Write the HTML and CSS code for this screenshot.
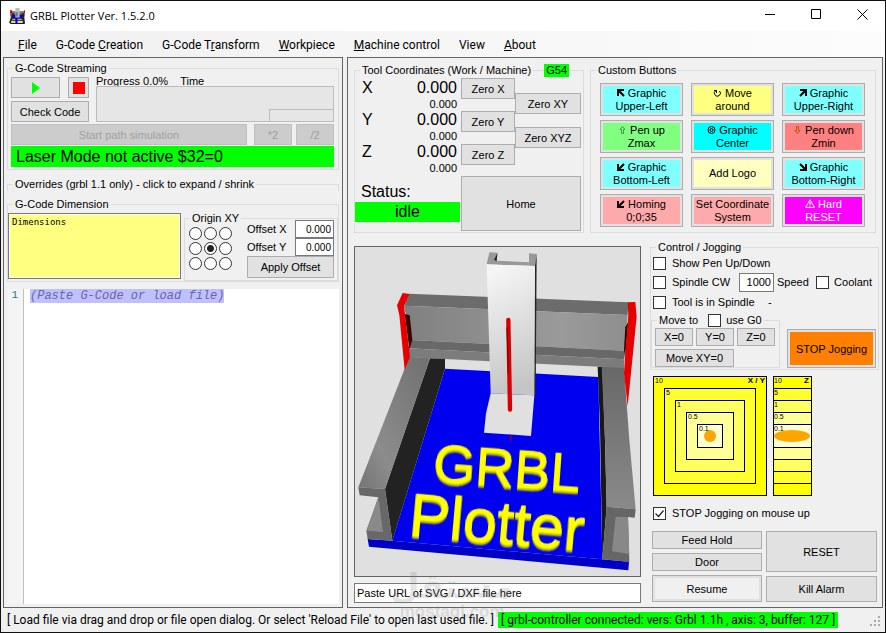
FILE: index.html
```html
<!DOCTYPE html>
<html lang="en">
<head>
	<meta charset="UTF-8">
	<title>GRBL Plotter Ver. 1.5.2.0</title>
	<link rel="stylesheet" href="styles.css">
</head>
<body>
	<div class="window">
		<header class="titlebar">
			<svg class="app-icon" viewBox="0 0 16 16" width="17" height="17">
				<path d="M1 3h14v5H1z" fill="#777"/>
				<path d="M4 6h8l3 9H1z" fill="#0000e0"/>
				<path d="M3 5h2L2 14H0zM12 5h2l1 9h-2z" fill="#222"/>
				<path d="M6 0h4v9H6z" fill="#bbb"/>
				<path d="M7 4h1v4H7z" fill="#444"/>
				<path d="M1 2h2v3H1zM14 2h1v3h-1z" fill="#d00"/>
				<path d="M3 10h3v1H3zM8 10h4v1H8zM2 12h4v2H2zM8 12h5v2H8z" fill="#ee0"/>
			</svg>
			<h1>GRBL Plotter Ver. 1.5.2.0</h1>
			<div class="win-btns">
				<button type="button" aria-label="Minimize"><svg width="11" height="11"><path d="M0 5.500h10" stroke="#000"/></svg></button>
				<button type="button" aria-label="Maximize"><svg width="11" height="11"><path d="M.5 .5h9v9h-9z" fill="none" stroke="#000"/></svg></button>
				<button type="button" aria-label="Close"><svg width="11" height="11"><path d="M.5 .5l10 10M10.500 .5l-10 10" stroke="#000"/></svg></button>
			</div>
		</header>
		<nav class="menubar">
			<a href="#"><u>F</u>ile</a>
			<a href="#">G-Code <u>C</u>reation</a>
			<a href="#">G-Code T<u>r</u>ansform</a>
			<a href="#"><u>W</u>orkpiece</a>
			<a href="#"><u>M</u>achine control</a>
			<a href="#">View</a>
			<a href="#"><u>A</u>bout</a>
		</nav>

		<main class="split">
			<section class="panel panel-left">
				<fieldset class="streaming">
					<legend>G-Code Streaming</legend>
					<div class="stream-body">
						<div class="stream-top">
							<div class="stream-btns">
								<button type="button" class="btn" aria-label="Start"><svg width="8" height="12"><path d="M0 0l8 6-8 6z" fill="#0f0"/></svg></button>
								<button type="button" class="btn" aria-label="Stop"><svg width="12" height="12"><path d="M0 0h12v12H0z" fill="#f00"/></svg></button>
								<button type="button" class="btn check-code">Check Code</button>
							</div>
							<div class="progress">
								<div class="progress-text"><span>Progress 0.0%</span><span>Time</span></div>
								<div class="progress-box"><div class="progress-time"></div></div>
							</div>
						</div>
						<div class="sim-row">
							<button type="button" class="btn sim" disabled>Start path simulation</button>
							<button type="button" class="btn" disabled>*2</button>
							<button type="button" class="btn" disabled>/2</button>
						</div>
						<div class="laser">Laser Mode not active $32=0</div>
					</div>
				</fieldset>
				<fieldset class="overrides">
					<legend>Overrides (grbl 1.1 only) - click to expand / shrink</legend>
				</fieldset>
				<fieldset class="dimension">
					<legend>G-Code Dimension</legend>
					<div class="dim-body">
						<textarea class="dim-text" aria-label="Dimensions" readonly>Dimensions</textarea>
						<fieldset class="origin">
							<legend>Origin XY</legend>
							<div class="origin-body">
								<div class="radios">
									<input type="radio" name="origin" aria-label="Top left">
									<input type="radio" name="origin" aria-label="Top center">
									<input type="radio" name="origin" aria-label="Top right">
									<input type="radio" name="origin" aria-label="Middle left">
									<input type="radio" name="origin" aria-label="Center" checked>
									<input type="radio" name="origin" aria-label="Middle right">
									<input type="radio" name="origin" aria-label="Bottom left">
									<input type="radio" name="origin" aria-label="Bottom center">
									<input type="radio" name="origin" aria-label="Bottom right">
								</div>
								<div class="offsets">
									<label for="offX">Offset X</label><input type="text" id="offX" value="0.000">
									<label for="offY">Offset Y</label><input type="text" id="offY" value="0.000">
									<button type="button" class="btn">Apply Offset</button>
								</div>
							</div>
						</fieldset>
					</div>
				</fieldset>
				<div class="editor">
					<div class="gutter">1</div>
					<pre class="code"><span>(Paste G-Code or load file)</span></pre>
				</div>
			</section>

			<section class="panel panel-right">
				<div class="top-row">
					<fieldset class="coords">
						<legend>Tool Coordinates (Work / Machine)</legend>
						<span class="g54">G54</span>
						<div class="coords-body">
							<div class="readout">
								<div class="axis"><b>X</b><span>0.000</span><small>0.000</small></div>
								<div class="axis"><b>Y</b><span>0.000</span><small>0.000</small></div>
								<div class="axis"><b>Z</b><span>0.000</span><small>0.000</small></div>
								<div class="status-label">Status:</div>
								<div class="status-value">idle</div>
							</div>
							<div class="zero">
								<div class="zero-cols">
									<div class="zero-single">
										<button type="button" class="btn">Zero X</button>
										<button type="button" class="btn">Zero Y</button>
										<button type="button" class="btn">Zero Z</button>
									</div>
									<div class="zero-multi">
										<button type="button" class="btn">Zero XY</button>
										<button type="button" class="btn">Zero XYZ</button>
									</div>
								</div>
								<button type="button" class="btn home">Home</button>
							</div>
						</div>
					</fieldset>
					<fieldset class="custom">
						<legend>Custom Buttons</legend>
						<div class="custom-grid">
							<button type="button" class="btn cyan"><span><svg class="ico" viewBox="0 0 8 8"><path d="M1 7V1h6M1.500 1.500L7 7"/></svg> Graphic<br>Upper-Left</span></button>
							<button type="button" class="btn yellow"><span><svg class="ico thin" viewBox="0 0 8 8"><path d="M2.500 1.500A3 3 0 1 0 6 2M.5 1.500h2.500V4"/></svg> Move<br>around</span></button>
							<button type="button" class="btn cyan"><span><svg class="ico" viewBox="0 0 8 8"><path d="M1 1h6v6M6.500 1.500L1 7"/></svg> Graphic<br>Upper-Right</span></button>
							<button type="button" class="btn green"><span><svg class="ico thin" viewBox="0 0 8 8"><path d="M1.500 3.500L4 .5l2.500 3H5v4H3v-4z" stroke="#494"/></svg> Pen up<br>Zmax</span></button>
							<button type="button" class="btn aqua"><span><svg class="ico thin" viewBox="0 0 8 8"><circle cx="4" cy="4" r="3.500"/><circle cx="4" cy="4" r="1.500"/></svg> Graphic<br>Center</span></button>
							<button type="button" class="btn red"><span><svg class="ico thin" viewBox="0 0 8 8"><path d="M1.500 4.500L4 7.500l2.500-3H5v-4H3v4z" stroke="#b50"/></svg> Pen down<br>Zmin</span></button>
							<button type="button" class="btn cyan"><span><svg class="ico" viewBox="0 0 8 8"><path d="M1 1v6h6M1.500 6.500L7 1"/></svg> Graphic<br>Bottom-Left</span></button>
							<button type="button" class="btn cream">Add Logo</button>
							<button type="button" class="btn cyan"><span><svg class="ico" viewBox="0 0 8 8"><path d="M7 1v6H1M6.500 6.500L1 1"/></svg> Graphic<br>Bottom-Right</span></button>
							<button type="button" class="btn pink"><span><svg class="ico" viewBox="0 0 8 8"><path d="M1 1v6h6M1.500 6.500L7 1"/></svg> Homing<br>0;0;35</span></button>
							<button type="button" class="btn pink">Set Coordinate<br>System</button>
							<button type="button" class="btn magenta"><span><svg class="ico warn" viewBox="0 0 10 9"><path d="M5 .7L9.400 8.400H.6zM5 3v3M5 6.700v1"/></svg> Hard<br>RESET</span></button>
						</div>
					</fieldset>
				</div>

				<div class="bottom-row">
					<div class="view-col">
						<div class="view3d">
							<svg viewBox="15 21 855 987" preserveAspectRatio="xMidYMid meet">
								<defs>
									<linearGradient id="col" x1=".3" y1="0" x2=".5" y2="1">
										<stop offset="0" stop-color="#f6f6f6"/>
										<stop offset="1" stop-color="#c4c4c4"/>
									</linearGradient>
									<linearGradient id="railL" x1="1" y1="0" x2="0" y2="1">
										<stop offset="0" stop-color="#707070"/>
										<stop offset=".7" stop-color="#8c8c8c"/>
										<stop offset="1" stop-color="#747474"/>
									</linearGradient>
									<linearGradient id="railR" x1="0" y1="0" x2="0" y2="1">
										<stop offset="0" stop-color="#686868"/>
										<stop offset="1" stop-color="#8a8a8a"/>
									</linearGradient>
									<linearGradient id="beam" x1="0" y1="0" x2="1" y2="0">
										<stop offset="0" stop-color="#808080"/>
										<stop offset=".7" stop-color="#9a9a9a"/>
										<stop offset="1" stop-color="#8e8e8e"/>
									</linearGradient>
								</defs>
								<!-- bed -->
								<path d="M285 386L745 411L757 958L127 902z" fill="#0000f0"/>
								<path d="M53 897L127 902L757 958L837 965L835 991L57 920z" fill="#0000c8"/>
								<!-- left rail -->
								<path d="M240 355H285V386L127 902L105 747z" fill="#222"/>
								<path d="M178 350L240 355L105 747L25 742z" fill="url(#railL)"/>
								<path d="M25 742L105 747L127 902L53 897L49 872L85 772L29 766z" fill="#686868"/>
								<path d="M85 772L99 876L50 872z" fill="#8a8a8a"/>
								<!-- right rail -->
								<path d="M743 380H757L765 600L770 800L757 958L750 560z" fill="#181818"/>
								<path d="M755 378L822 382L838 600L857 808L770 800L765 600z" fill="url(#railR)"/>
								<path d="M770 800L857 808L854 833L834 831L838 966L757 958z" fill="#666"/>
								<path d="M797 830L834 832L838 942L786 934z" fill="#888"/>
								<!-- gantry -->
								<path d="M178 161L835 187L833 225L162 197z" fill="#6c6c6c"/>
								<path d="M162 197L833 225L823 332L183 300z" fill="url(#beam)"/>
								<path d="M183 300L823 332V358L175 325z" fill="#686868"/>
								<path d="M175 325L823 358L822 384L178 352z" fill="#7c7c7c"/>
								<path d="M164 222L179 226L187 300L178 328z" fill="#300"/>
								<path d="M835 245L825 355L822 330L826 262z" fill="#200"/>
								<path d="M158 159L179 162L162 197L180 350L164 390L148 225L141 196z" fill="#e60000"/>
								<path d="M833 187L856 186L860 230L833 498L822 400L826 340L835 225z" fill="#e60000"/>
								<!-- z column -->
								<path d="M418 37L443 38L440 62L537 67V40L560 42L555 78L410 73z" fill="#999"/>
								<path d="M432 60L442 40L440 63z" fill="#222"/>
								<path d="M555 78L560 42L557 470L552 466z" fill="#252525"/>
								<path d="M410 73L555 78L553 466L422 460z" fill="url(#col)"/>
								<path d="M422 460L553 466L543 588L402 578L408 520z" fill="#e0e0e0"/>
								<path d="M475 240L480 509" stroke="#d80000" stroke-width="13" stroke-linecap="round"/>
								<path d="M471 262L475 400" stroke="#700" stroke-width="3"/>
								<path d="M482 586V603" stroke="#a00" stroke-width="4"/>
								<text class="logo" transform="translate(247 724) rotate(4)" font-size="162">GRBL</text>
								<text class="logo" transform="translate(174 886) rotate(5)" font-size="182">Plotter</text>
							</svg>
						</div>
						<input type="text" class="url" aria-label="URL" value="Paste URL of SVG / DXF file here">
					</div>

					<div class="side">
						<fieldset class="jogging">
							<legend>Control / Jogging</legend>
							<div class="jog-opts">
								<div class="opt"><label><input type="checkbox">Show Pen Up/Down</label></div>
								<div class="opt">
									<label class="spindle"><input type="checkbox">Spindle CW</label>
									<input type="text" id="speed" class="speed" value="1000">
									<label for="speed" class="speed-label">Speed</label>
									<label class="coolant"><input type="checkbox">Coolant</label>
								</div>
								<div class="opt"><label class="tool-in"><input type="checkbox">Tool is in Spindle</label><span>-</span></div>
							</div>
							<div class="move-row">
								<fieldset class="moveto">
									<legend><span>Move to</span><label><input type="checkbox">use G0</label></legend>
									<div class="move-grid">
										<button type="button" class="btn">X=0</button>
										<button type="button" class="btn">Y=0</button>
										<button type="button" class="btn">Z=0</button>
										<button type="button" class="btn wide">Move XY=0</button>
									</div>
								</fieldset>
								<button type="button" class="btn orange">STOP Jogging</button>
							</div>
						</fieldset>
						<div class="pads">
							<svg class="pad" width="114" height="120" viewBox="0 0 114 120">
								<rect x=".5" y=".5" width="113" height="119" fill="#ff0"/>
								<rect x="11.500" y="12.500" width="91" height="95" fill="#ffff30"/>
								<rect x="22.500" y="24.500" width="69" height="71" fill="#ffff60"/>
								<rect x="33.500" y="36.500" width="47" height="47" fill="#ffff98"/>
								<rect x="44.500" y="48.500" width="25" height="23" fill="#ffffd0"/>
								<circle cx="57" cy="60" r="6"/>
								<text x="2" y="7">10</text>
								<text x="13" y="19">5</text>
								<text x="24" y="31">1</text>
								<text x="35" y="43">0.5</text>
								<text x="46" y="55">0.1</text>
								<text x="112" y="7" class="ttl">X / Y</text>
							</svg>
							<svg class="pad" width="39" height="120" viewBox="0 0 39 120">
								<rect x=".5" y=".5" width="38" height="119" fill="#ff0"/>
								<rect x=".5" y="12.500" width="38" height="95" fill="#ffff30"/>
								<rect x=".5" y="24.500" width="38" height="71" fill="#ffff60"/>
								<rect x=".5" y="36.500" width="38" height="47" fill="#ffff98"/>
								<rect x=".5" y="48.500" width="38" height="23" fill="#ffffd0"/>
								<ellipse cx="19" cy="60" rx="18" ry="6"/>
								<text x="1" y="7">10</text>
								<text x="1" y="19">5</text>
								<text x="1" y="31">1</text>
								<text x="1" y="43">0.5</text>
								<text x="1" y="55">0.1</text>
								<text x="36" y="7" class="ttl">Z</text>
							</svg>
						</div>
						<label class="stop-up"><input type="checkbox" checked>STOP Jogging on mouse up</label>
						<div class="machine-btns">
							<div>
								<button type="button" class="btn">Feed Hold</button>
								<button type="button" class="btn">Door</button>
								<button type="button" class="btn resume">Resume</button>
							</div>
							<div>
								<button type="button" class="btn reset">RESET</button>
								<button type="button" class="btn kill">Kill Alarm</button>
							</div>
						</div>
					</div>
				</div>
			</section>
		</main>

		<footer class="statusbar">
			<span>[ Load file via drag and drop or file open dialog. Or select 'Reload File' to open last used file. ]</span>
			<span class="connected">[ grbl-controller connected: vers: Grbl 1.1h , axis: 3, buffer: 127 ]</span>
			<svg class="grip" width="11" height="11" fill="#aaa"><path d="M8 0h2v2H8zM4 4h2v2H4zM8 4h2v2H8zM0 8h2v2H0zM4 8h2v2H4zM8 8h2v2H8z"/></svg>
		</footer>
		<div class="watermark"><span lang="ar">مستقل</span><span>mostaql.com</span></div>
	</div>
</body>
</html>
```
FILE: styles.css
```css
*{ box-sizing: border-box; margin: 0; padding: 0;}
body{ font: 11px/14px "Liberation Sans", Arial, sans-serif; color: #000; background: #f0f0f0;}
button, input, textarea{ font: inherit; color: inherit;}
fieldset{ min-width: 0; border: 1px solid #dcdcdc;}
legend{ margin-left: 5px; padding: 0 2px;}
label{ display: flex; align-items: center;}

.window{ position: relative; display: flex; flex-direction: column; min-height: 100vh; border: 1px solid #111;}

/* title and menu */
.titlebar{ display: flex; align-items: center; height: 30px; padding-left: 8px; background: #fff;}
.titlebar h1{ flex: 1; margin-left: 4px; font: 11px/16px "Open Sans", sans-serif;}
.win-btns{ display: flex;}
.win-btns button{ width: 46px; height: 29px; border: 0; background: none;}
.menubar{ display: flex; gap: 19px; height: 26px; padding: 5px 17px; background: linear-gradient(to right, #f0f0f0, #fcfcfc); font: 12px/18px Roboto, sans-serif;}
.menubar a{ color: #000; text-decoration: none;}

/* buttons */
.btn{ display: flex; align-items: center; justify-content: center; border: 1px solid #adadad; background: #e1e1e1; white-space: nowrap;}
.btn:disabled{ border-color: #bfbfbf; background: #ccc; color: #a0a0a0;}

input[type="checkbox"]{ appearance: none; flex: none; width: 13px; height: 13px; margin-right: 6px; border: 1px solid #333; background: #fff;}
input[type="checkbox"]:checked{ background: #fff url("data:image/svg+xml,%3Csvg xmlns='http://www.w3.org/2000/svg' viewBox='0 0 11 11'%3E%3Cpath d='M1.500 5.500l3 3 5-6' fill='none' stroke='%23222' stroke-width='1.200'/%3E%3C/svg%3E");}
input[type="radio"]{ appearance: none; width: 13px; height: 13px; border: 1px solid #333; border-radius: 50%; background: #fff;}
input[type="radio"]:checked{ background: radial-gradient(#222 3px, #fff 4px);}
input[type="text"]{ border: 1px solid #7a7a7a; background: #fff;}

/* split panels */
.split{ flex: 1; display: grid; grid-template-columns: 340fr 536fr; gap: 4px; padding: 0 2px;}
.panel{ display: flex; flex-direction: column; min-width: 0; border: 1px solid #646464;}
.panel-left{ padding: 3px;}
.panel-right{ padding: 5px 3px 4px 6px;}

.stream-body{ padding: 2px 4px 2px 3px;}
.stream-top{ display: flex; gap: 7px;}
.stream-btns{ display: grid; grid-template-columns: 49px 21px; grid-auto-rows: 21px; gap: 3px 8px; width: 78px;}
.check-code{ grid-column: 1 / 3;}
.progress{ flex: 1; display: flex; flex-direction: column;}
.progress-text{ display: flex; gap: 12px; line-height: 9px;}
.progress-box{ flex: 1; display: flex; align-items: flex-end; justify-content: flex-end; border: 1px solid #bcbcbc; background: #e6e6e6;}
.progress-time{ width: 27%; height: 12px; border: 1px solid #bcbcbc; border-width: 1px 0 0 1px;}
.sim-row{ display: flex; gap: 4px; margin: 2px 0 1px;}
.sim-row .btn{ width: 38px; height: 21px;}
.sim-row .sim{ flex: 1; margin-right: 3px;}
.laser{ padding: 0 5px; background: #0f0; font-size: 16px; line-height: 21px;}

.overrides{ margin-top: 7px; border-bottom: 0;}
.dimension{ margin-top: 6px;}
.dim-body{ display: flex; gap: 3px;}
.dim-text{ flex: 1; min-width: 0; margin: 2px 0; padding: 2px 3px; border: 1px solid #7a7a7a; outline: 1px solid #fff; outline-offset: -2px; resize: none; background: #ffff80; font: 9px/12px "DejaVu Sans Mono", monospace;}
.origin{ width: 154px; height: 70px;}
.origin-body{ display: flex; justify-content: space-between; padding: 2px 3px 0 4px;}
.radios{ display: grid; grid-template-columns: repeat(3, 13px); grid-auto-rows: 13px; gap: 2px;}
.offsets{ display: grid; grid-template-columns: 1fr 39px; width: 87px; margin-top: -7px;}
.offsets input{ width: 39px; height: 18px; padding: 0 2px; text-align: right; font-size: 10px;}
.offsets .btn{ grid-column: 1 / 3; height: 22px;}

.editor{ flex: 1; display: flex; margin-top: 7px; background: #fff;}
.gutter{ width: 17px; padding-right: 5px; border-right: 1px solid #c0c0c0; background: #f4f4f4; color: #2b7a8a; text-align: right; font: 11px/13px "Liberation Mono", monospace;}
.code{ padding: 1px 6px; color: #6666a8; font: italic 12px/13px "Liberation Mono", monospace;}
.code span{ background: #c0c0ff;}

/* coordinates */
.top-row{ display: grid; grid-template-columns: 230fr 286fr; gap: 6px; margin-right: 3px;}
.coords{ position: relative;}
.g54{ position: absolute; top: -13px; right: 14px; padding: 0 2px; background: #0f0; line-height: 13px;}
.coords-body{ display: flex; padding: 1px 2px 1px 0;}
.readout{ flex: 1; margin-right: 1px;}
.axis{ display: grid; grid-template-columns: 1fr auto; padding: 0 3px 0 7px; font-size: 16px; line-height: 20px;}
.axis b{ font-weight: normal;}
.axis small{ grid-column: 2; font-size: 11px; line-height: 12px; text-align: right;}
.status-label{ padding: 8px 6px 0; font-size: 16px; line-height: 20px;}
.status-value{ background: #0f0; font-size: 16px; line-height: 20px; text-align: center;}
.zero{ width: 120px;}
.zero-cols{ display: flex; height: 98px;}
.zero-cols .btn{ height: 21px;}
.zero-single{ flex: 54; display: flex; flex-direction: column; gap: 12px;}
.zero-multi{ flex: 66; display: flex; flex-direction: column; gap: 13px; padding-top: 15px;}
.home{ width: 100%; height: 55px;}

.custom-grid{ display: grid; grid-template-columns: repeat(3, 1fr); grid-auto-rows: 33px; gap: 4px 8px; padding: 6px 10px 5px 9px;}
.custom-grid .btn{ box-shadow: inset 0 0 0 2px #e1e1e1; line-height: 13px;}
.ico{ width: 8px; height: 8px; fill: none; stroke: currentColor; stroke-width: 2;}
.thin{ width: 9px; stroke-width: 1;}
.warn{ width: 10px; height: 9px; stroke-width: 1;}
.cyan{ background: #80ffff;}
.aqua{ background: #0ff;}
.yellow{ background: #ffff80;}
.cream{ background: #ffffc0;}
.green{ background: #80ff80;}
.red{ background: #ff8080;}
.pink{ background: #ffaaaa;}
.magenta{ background: #f0f; color: #fff;}

/* 3d view */
.bottom-row{ flex: 1; display: flex; gap: 9px; margin-top: 7px;}
.view-col{ flex: 1; display: flex; flex-direction: column; gap: 6px; padding-top: 6px;}
.view3d{ flex: 1; display: flex; border: 1px solid #646464; background: #e0e0e0;}
.view3d svg{ width: 100%;}
.logo{ fill: #ff0; stroke: #ff0; stroke-width: 2; font-family: "Liberation Sans", Arial, sans-serif; filter: drop-shadow(0 4px 0 #d0d000) drop-shadow(0 4px 0 #b8b800);}
.url{ height: 20px; padding: 0 2px;}

/* jogging */
.side{ display: flex; flex-direction: column; width: 229px;}
.jog-opts{ padding: 0 6px 0 2px;}
.opt{ display: flex; align-items: center; height: 20px;}
.opt:first-child{ height: 18px;}
.spindle{ width: 86px;}
.opt .speed{ width: 35px; height: 19px; padding: 0 2px; text-align: right;}
.speed-label{ margin-left: 3px;}
.coolant{ margin-left: auto;}
.coolant input, .moveto input{ margin-right: 5px;}
.tool-in{ width: 115px;}
.move-row{ display: flex; justify-content: space-between; align-items: flex-end; padding: 1px 2px 1px 0;}
.moveto{ width: 129px;}
.moveto legend{ display: flex;}
.moveto legend label{ margin-left: 10px;}
.move-grid{ display: grid; grid-template-columns: repeat(3, 38px); grid-auto-rows: 18px; gap: 3px; padding: 1px 3px 0;}
.move-grid .wide{ grid-column: 1 / 3;}
.orange{ width: 89px; height: 39px; background: #ff8000; box-shadow: inset 0 0 0 2px #e1e1e1;}

.pads{ display: flex; gap: 6px; margin: 6px 3px 10px;}
.pad rect{ stroke: #000;}
.pad circle, .pad ellipse{ fill: #ffa500;}
.pad text{ font: 7px "Liberation Sans", Arial, sans-serif;}
.pad .ttl{ font: bold 8px "Liberation Sans", Arial, sans-serif; text-anchor: end;}
.stop-up{ padding: 0 3px;}
.machine-btns{ display: grid; grid-template-columns: 110fr 111fr; gap: 4px; margin: auto 2px 1px;}
.machine-btns div{ display: flex; flex-direction: column; gap: 4px;}
.machine-btns .btn{ height: 18px;}
.machine-btns .resume{ height: 27px; background: #f0f0f0; box-shadow: inset 0 0 0 2px #e1e1e1;}
.machine-btns .reset{ flex: 1; height: auto;}
.machine-btns .kill{ height: 26px;}

/* status bar */
.statusbar{ display: flex; align-items: center; gap: 4px; height: 24px; padding: 0 4px 0 6px; white-space: nowrap; font: 12px/16px Roboto, sans-serif;}
.connected{ padding: 0 3px; background: #0f0;}
.grip{ align-self: flex-end; margin: 0 0 5px auto;}
.watermark{ position: absolute; left: 389px; bottom: 12px; display: flex; flex-direction: column; align-items: center; color: rgba(120, 120, 120, .2); font: bold 17px/16px "Liberation Sans", Arial, sans-serif; pointer-events: none;}
.watermark span:first-child{ font: bold 34px/36px "DejaVu Sans", sans-serif;}
```
